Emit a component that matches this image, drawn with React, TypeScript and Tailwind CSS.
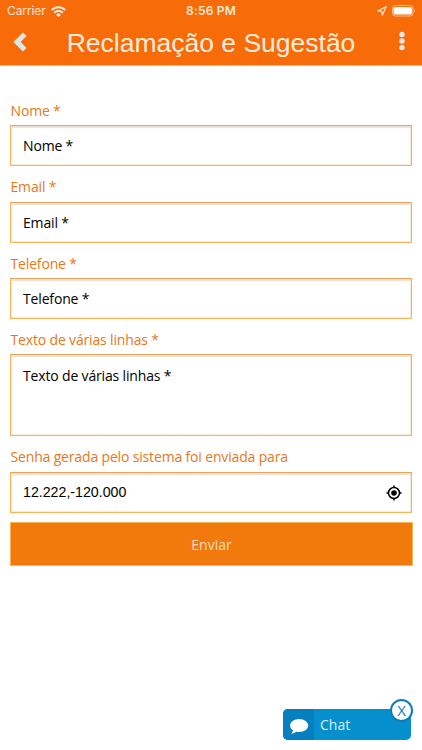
import type { ReactNode } from "react";

const field =
  "w-full border border-[#f6b559] border-t-[#e8a55c] bg-white px-[12px] text-left text-[14px] tracking-[-0.16px] text-black shadow-[inset_0_2px_1px_#ece0d6,inset_0_0_0_0.5px_#fbd9a5]";

function Label({ children, className = "" }: { children: ReactNode; className?: string }) {
  return (
    <div
      className={`flex items-center whitespace-nowrap pl-[0.5px] text-[14px] tracking-[-0.16px] text-[#e6781a] ${className}`}
    >
      <span>{children}</span>
    </div>
  );
}

function StatusBar() {
  return (
    <div className="relative flex h-[22px] items-center justify-between pl-[7px] pr-[6px] font-['Inter',sans-serif] text-[12px] text-[#ffe9d6]">
      <div className="flex items-center gap-[5px]">
        <span className="tracking-[-0.1px]">Carrier</span>
        <svg width="15" height="11" viewBox="0 0 15 11" fill="none" stroke="#fff3e8" strokeWidth="2.1">
          <path d="M.8 4a9.6 9.6 0 0 1 13.4 0" />
          <path d="M3.2 6.7a6.1 6.1 0 0 1 8.6 0" />
          <path d="M7.5 11 5.1 8.7a3.3 3.3 0 0 1 4.8 0z" fill="#fff3e8" stroke="none" />
        </svg>
      </div>
      <span className="absolute left-[186px] font-semibold tracking-[0.2px]">8:56 PM</span>
      <div className="flex items-center gap-[5px]">
        <svg width="10" height="10" viewBox="0 0 10 10" fill="none" stroke="#ffe9d6" strokeWidth="1.2" strokeLinejoin="round">
          <path d="M9.2.8.8 4.7l3.9.6.6 3.9z" />
        </svg>
        <svg width="24" height="12" viewBox="0 0 24 12">
          <rect x=".5" y=".5" width="20.5" height="10.5" rx="2.8" fill="none" stroke="#ffbd8c" />
          <rect x="1.5" y="2" width="18.5" height="7.5" rx="1.5" fill="#fff" />
          <path d="M22.3 4v3.6c1-.5 1-3.1 0-3.6z" fill="#ffbd8c" />
        </svg>
      </div>
    </div>
  );
}

function Header() {
  return (
    <header className="h-[66px] border-b border-[#ffb27a] bg-[#f86b09]">
      <StatusBar />
      <div className="relative flex h-[43px] items-center justify-center">
        <svg className="absolute left-[13px] top-[10px]" width="14" height="20" viewBox="0 0 14 20">
          <path d="m9.9.6 3.6 3.5-5.8 6 5.8 5.9-3.6 3.4L.4 10.1z" fill="#dce7e6" />
        </svg>
        <h1 className="-mt-[2px] whitespace-nowrap font-['Liberation_Sans',Arial,sans-serif] text-[26.5px] leading-[42px] text-[#ffeddc]">
          Reclamação e Sugestão
        </h1>
        <svg className="absolute left-[399px] top-[9px]" width="6" height="20" viewBox="0 0 6 20" fill="#e3e8e6">
          <circle cx="3" cy="3.5" r="2.7" />
          <circle cx="3" cy="10" r="2.7" />
          <circle cx="3" cy="16.5" r="2.7" />
        </svg>
      </div>
    </header>
  );
}

function Chat() {
  return (
    <div className="absolute left-[283px] top-[709px] flex h-[31px] w-[128px] items-center rounded-[5px] bg-[#058fcd] text-[14px] text-[#d8f1fb]">
      <div className="flex h-full w-[31px] items-center justify-center rounded-l-[5px] bg-[#057fbe] pt-[3px]">
        <svg width="20" height="16" viewBox="0 0 20 16" fill="#fff">
          <path d="M10.2 1C5.2 1 1.1 3.9 1.1 7.6c0 2.1 1.2 3.8 2.9 5-.2 1-.8 2-1.8 2.9 2 0 3.7-.7 4.9-1.8 1 .3 2 .4 3.1.4 5 0 9-2.9 9-6.5S15.2 1 10.2 1z" />
        </svg>
      </div>
      <span className="pl-[6px]">Chat</span>
      <button className="absolute left-[107px] top-[-10px] flex size-[23px] items-center justify-center rounded-full border-2 border-[#0d7db8] bg-white pb-px text-[15px] leading-none text-[#0d7db8]">
        X
      </button>
    </div>
  );
}

export default function App() {
  return (
    <div className="relative h-[750px] w-[422px] overflow-hidden bg-white font-['Open_Sans',sans-serif]">
      <Header />
      <form className="flex w-[412px] flex-col pl-[10px] pt-[29px]" onSubmit={(e) => e.preventDefault()}>
        <Label className="h-[30px]">Nome *</Label>
        <div className={`${field} flex h-[41px] items-center`}>Nome *</div>
        <Label className="mt-[5px] h-[31px]">Email *</Label>
        <div className={`${field} flex h-[41px] items-center`}>Email *</div>
        <Label className="mt-[5px] h-[30px]">Telefone *</Label>
        <div className={`${field} flex h-[41px] items-center`}>Telefone *</div>
        <Label className="mt-[5px] h-[30px]">Texto de várias linhas *</Label>
        <div className={`${field} h-[82px] pt-[10px]`}>Texto de várias linhas *</div>
        <Label className="mb-px mt-[5px] h-[30px]">Senha gerada pelo sistema foi enviada para</Label>
        <div className={`${field} flex h-[41px] items-center justify-between pr-[9px]`}>
          <span className="font-['Liberation_Sans',Arial,sans-serif] text-[14.2px] tracking-normal">
            12.222,-120.000
          </span>
          <svg width="16" height="16" viewBox="0 0 16 16" fill="none" stroke="#000" strokeWidth="1.5">
            <circle cx="8" cy="8" r="5.5" />
            <circle cx="8" cy="8" r="2.8" fill="#000" stroke="none" />
            <path d="M8 .5V3M8 13v2.5M.5 8H3M13 8h2.5" />
          </svg>
        </div>
        <button className="mt-[9px] h-[44px] w-[403px] border border-[#f8b650] bg-[#f27a0c] text-[14px] text-[#fbdcc0]">
          Enviar
        </button>
      </form>
      <Chat />
    </div>
  );
}
